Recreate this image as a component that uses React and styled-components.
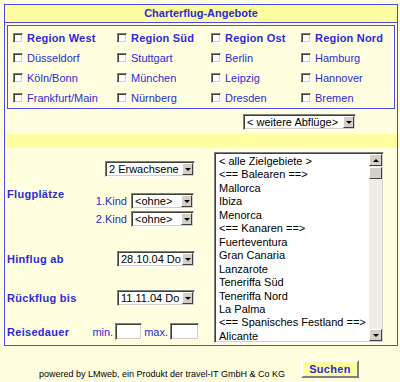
import React from "react"
import styled, { createGlobalStyle } from "styled-components"

const blue = "#2b2bdc"
const line = "#4c4ce6"
const cream = "#ffffe0"
const band = "#ffffa2"

const regions = [
  ["Region West", "Region Süd", "Region Ost", "Region Nord"],
  ["Düsseldorf", "Stuttgart", "Berlin", "Hamburg"],
  ["Köln/Bonn", "München", "Leipzig", "Hannover"],
  ["Frankfurt/Main", "Nürnberg", "Dresden", "Bremen"],
]

const destinations = [
  "< alle Zielgebiete >",
  "<== Balearen ==>",
  "Mallorca",
  "Ibiza",
  "Menorca",
  "<== Kanaren ==>",
  "Fuerteventura",
  "Gran Canaria",
  "Lanzarote",
  "Teneriffa Süd",
  "Teneriffa Nord",
  "La Palma",
  "<== Spanisches Festland ==>",
  "Alicante",
]

const GlobalStyle = createGlobalStyle`
  body {
    margin: 0;
    background: ${cream};
    font-family: "Liberation Sans", Arial, sans-serif;
  }
`

const Page = styled.div`
  width: 400px;
  height: 382px;
  box-sizing: border-box;
  padding: 4px 0 0 4px;
`

const Frame = styled.div`
  width: 394px;
  box-sizing: border-box;
  border: 1px solid ${line};
`

const Title = styled.div`
  height: 17px;
  line-height: 17px;
  background: ${band};
  border-bottom: 1px solid ${line};
  color: ${blue};
  font-size: 11px;
  font-weight: bold;
  text-align: center;
`

const RegionBox = styled.div`
  margin: 2px 2px 0;
  border: 1px solid ${line};
  padding: 2px 0 0 5px;
  display: grid;
  grid-template-columns: 104px 94px 90px 1fr;
  grid-auto-rows: 20px;
`

const Check = styled.label`
  display: flex;
  align-items: center;
  gap: 4px;
  color: ${blue};
  font-size: 11px;
  font-weight: ${(p) => (p.$head ? "bold" : "normal")};
  letter-spacing: ${(p) => (p.$head ? "0.2px" : "0")};
`

const Box = styled.span`
  width: 10px;
  height: 10px;
  box-sizing: border-box;
  background: #fff;
  border: 1px solid;
  border-color: #808080 #fff #fff #808080;
  box-shadow: inset 1px 1px #404040, inset -1px -1px #d4d0c8;
`

const MoreRow = styled.div`
  padding: 5px 0 4px 238px;
`

const Band = styled.div`
  height: 14px;
  background: ${band};
`

const Lower = styled.div`
  display: grid;
  grid-template-columns: 209px 1fr;
`

const LeftCol = styled.div`
  padding: 13px 19px 4px 2px;
  display: flex;
  flex-direction: column;
`

const Row = styled.div`
  display: flex;
  align-items: center;
  justify-content: space-between;
  margin-top: ${(p) => p.$gap || 0}px;
`

const Label = styled.span`
  color: ${blue};
  font-size: 11px;
  font-weight: bold;
  letter-spacing: 0.3px;
`

const Stack = styled.div`
  display: flex;
  flex-direction: column;
  align-items: flex-end;
`

const KindRow = styled.div`
  display: flex;
  align-items: center;
  gap: 4px;
  margin-top: ${(p) => p.$gap}px;
  margin-right: 1px;
`

const Small = styled.span`
  color: ${blue};
  font-size: 11px;
`

const SelectBox = styled.div`
  width: ${(p) => p.$w}px;
  height: 16px;
  box-sizing: border-box;
  display: flex;
  background: #fff;
  border: 1px solid;
  border-color: #808080 #fff #fff #808080;
  box-shadow: inset 1px 1px #404040, inset -1px -1px #d4d0c8;
  padding: 1px;
`

const SelectText = styled.span`
  flex: 1;
  padding-left: 2px;
  font-size: 11px;
  line-height: 12px;
  color: #000;
  white-space: nowrap;
  overflow: hidden;
`

const DropBtn = styled.span`
  width: 11px;
  box-sizing: border-box;
  background: #d4d0c8;
  border: 1px solid;
  border-color: #fff #404040 #404040 #fff;
  display: flex;
  align-items: center;
  justify-content: center;
  &::after {
    content: "";
    border-left: 3px solid transparent;
    border-right: 3px solid transparent;
    border-${(p) => (p.$up ? "bottom" : "top")}: 3px solid #000;
  }
`

const Field = styled.span`
  width: ${(p) => p.$w}px;
  height: 17px;
  box-sizing: border-box;
  background: #fff;
  border: 1px solid;
  border-color: #808080 #fff #fff #808080;
  box-shadow: inset 1px 1px #404040, inset -1px -1px #d4d0c8;
`

const Duration = styled.div`
  display: flex;
  align-items: center;
  gap: 2px;
  margin-right: -4px;
`

const RightCol = styled.div`
  padding: 4px 0 2px;
`

const ListBox = styled.div`
  width: 170px;
  height: 191px;
  box-sizing: border-box;
  display: flex;
  background: #fff;
  border: 1px solid;
  border-color: #808080 #fff #fff #808080;
  box-shadow: inset 1px 1px #404040, inset -1px -1px #d4d0c8;
  padding: 1px;
`

const Items = styled.div`
  flex: 1;
  overflow: hidden;
  padding: 1px 0 0 3px;
  font-size: 11px;
  line-height: 13.45px;
  color: #000;
  white-space: nowrap;
`

const Scrollbar = styled.div`
  width: 13px;
  display: flex;
  flex-direction: column;
  background: #eeede6;
`

const ScrollBtn = styled(DropBtn)`
  width: 13px;
  height: 12px;
  flex: none;
`

const Thumb = styled.span`
  height: 12px;
  margin-top: 1px;
  box-sizing: border-box;
  background: #d4d0c8;
  border: 1px solid;
  border-color: #fff #404040 #404040 #fff;
`

const Track = styled.span`
  flex: 1;
`

const Footer = styled.div`
  display: flex;
  align-items: flex-end;
  margin-top: 14px;
  padding-left: 35px;
`

const Powered = styled.span`
  font-size: 9px;
  line-height: 11px;
  color: #000;
  margin-bottom: -2px;
`

const SearchButton = styled.button`
  margin-left: 16px;
  width: 58px;
  height: 18px;
  padding: 0;
  background: ${band};
  border: 2px solid;
  border-color: #fff #808080 #808080 #fff;
  color: ${blue};
  font-family: "Liberation Sans", Arial, sans-serif;
  font-size: 11px;
  font-weight: bold;
  letter-spacing: 0.3px;
`

const Select = ({ w, children }) => (
  <SelectBox $w={w}>
    <SelectText>{children}</SelectText>
    <DropBtn />
  </SelectBox>
)

export default function App() {
  return (
    <Page>
      <GlobalStyle />
      <Frame>
        <Title>Charterflug-Angebote</Title>
        <RegionBox>
          {regions.map((row, i) =>
            row.map((name) => (
              <Check key={name} $head={i === 0}>
                <Box />
                {name}
              </Check>
            ))
          )}
        </RegionBox>
        <MoreRow>
          <Select w={113}>{"< weitere Abflüge>"}</Select>
        </MoreRow>
        <Band />
        <Lower>
          <LeftCol>
            <Row>
              <Label>Flugplätze</Label>
              <Stack>
                <Select w={90}>2 Erwachsene</Select>
                <KindRow $gap={16}>
                  <Small>1.Kind</Small>
                  <Select w={63}>{"<ohne>"}</Select>
                </KindRow>
                <KindRow $gap={2}>
                  <Small>2.Kind</Small>
                  <Select w={63}>{"<ohne>"}</Select>
                </KindRow>
              </Stack>
            </Row>
            <Row $gap={24}>
              <Label>Hinflug ab</Label>
              <Select w={78}>28.10.04 Do</Select>
            </Row>
            <Row $gap={23}>
              <Label>Rückflug bis</Label>
              <Select w={78}>11.11.04 Do</Select>
            </Row>
            <Row $gap={17}>
              <Label>Reisedauer</Label>
              <Duration>
                <Small>min.</Small>
                <Field $w={27} />
                <Small>max.</Small>
                <Field $w={29} />
              </Duration>
            </Row>
          </LeftCol>
          <RightCol>
            <ListBox>
              <Items>
                {destinations.map((d) => (
                  <div key={d}>{d}</div>
                ))}
              </Items>
              <Scrollbar>
                <ScrollBtn $up />
                <Thumb />
                <Track />
                <ScrollBtn />
              </Scrollbar>
            </ListBox>
          </RightCol>
        </Lower>
      </Frame>
      <Footer>
        <Powered>powered by LMweb, ein Produkt der travel-IT GmbH &amp; Co KG</Powered>
        <SearchButton>Suchen</SearchButton>
      </Footer>
    </Page>
  )
}
